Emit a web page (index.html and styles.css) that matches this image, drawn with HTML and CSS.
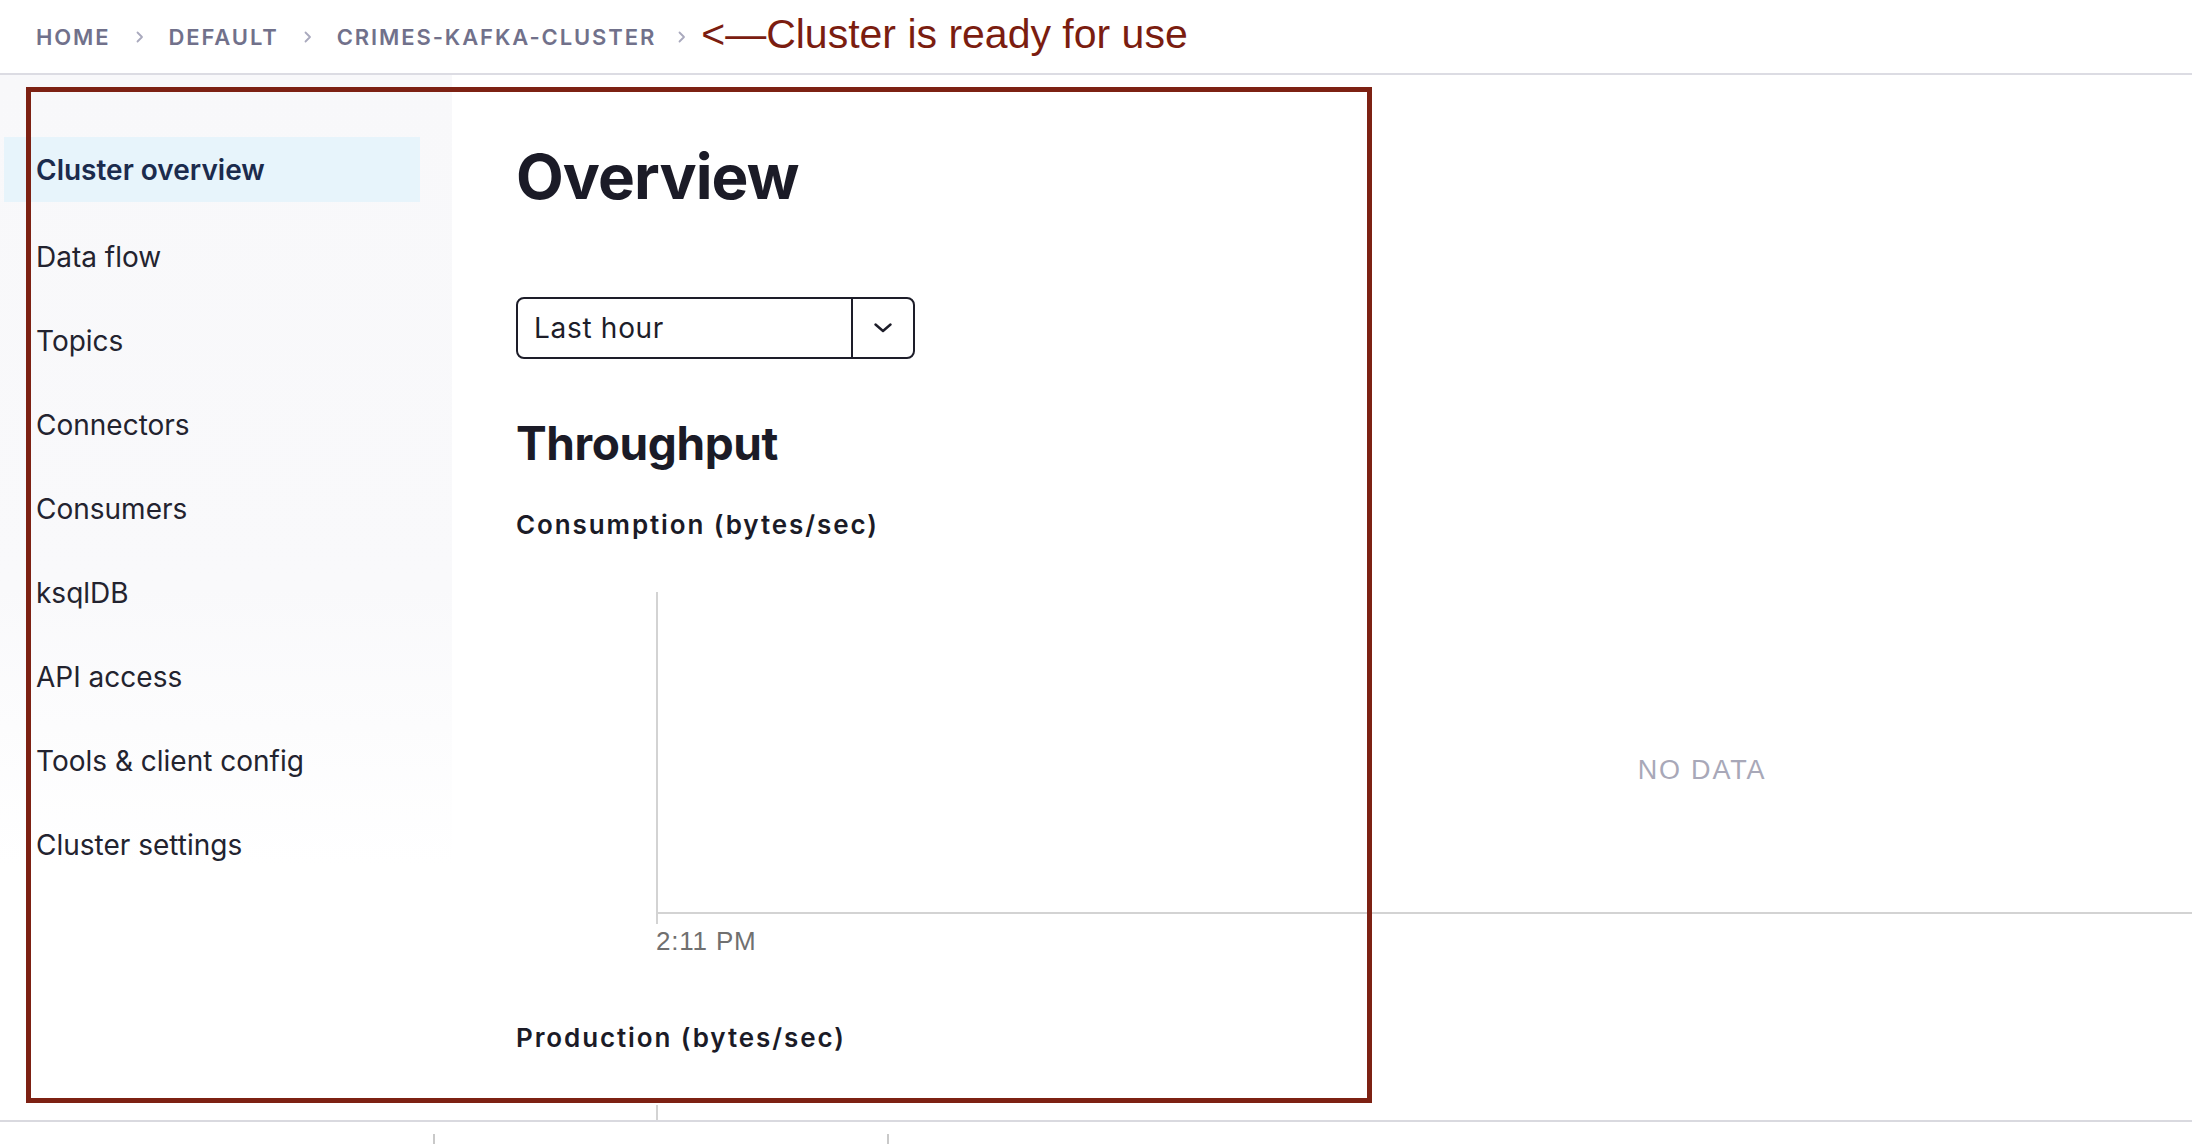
FILE: index.html
```html
<!DOCTYPE html>
<html lang="en">
<head>
<meta charset="utf-8">
<title>Cluster overview</title>
<link rel="stylesheet" href="styles.css">
</head>
<body>
<header class="topbar">
  <nav class="crumbs">
    <span class="crumb">Home</span>
    <svg class="sep" viewBox="0 0 8 12" width="8" height="12"><path d="M1.5 1.5 L6 6 L1.5 10.5" fill="none" stroke="#a9a9bd" stroke-width="1.8" stroke-linecap="round" stroke-linejoin="round"/></svg>
    <span class="crumb">Default</span>
    <svg class="sep" viewBox="0 0 8 12" width="8" height="12"><path d="M1.5 1.5 L6 6 L1.5 10.5" fill="none" stroke="#a9a9bd" stroke-width="1.8" stroke-linecap="round" stroke-linejoin="round"/></svg>
    <span class="crumb">crimes-kafka-cluster</span>
    <svg class="sep sep-last" viewBox="0 0 8 12" width="8" height="12"><path d="M1.5 1.5 L6 6 L1.5 10.5" fill="none" stroke="#a9a9bd" stroke-width="1.8" stroke-linecap="round" stroke-linejoin="round"/></svg>
    <span class="note">&lt;—Cluster is ready for use</span>
  </nav>
</header>

<div class="layout">
  <aside class="sidebar">
    <ul class="nav">
      <li class="nav-item active">Cluster overview</li>
      <li class="nav-item">Data flow</li>
      <li class="nav-item">Topics</li>
      <li class="nav-item">Connectors</li>
      <li class="nav-item">Consumers</li>
      <li class="nav-item">ksqlDB</li>
      <li class="nav-item">API access</li>
      <li class="nav-item">Tools &amp; client config</li>
      <li class="nav-item">Cluster settings</li>
    </ul>
  </aside>

  <main class="main">
    <h1 class="title">Overview</h1>

    <div class="select">
      <span class="select-value">Last hour</span>
      <span class="select-btn">
        <svg viewBox="0 0 18 10" width="18" height="10"><path d="M1.5 1.5 L9 8 L16.5 1.5" fill="none" stroke="#1d1d29" stroke-width="2.4" stroke-linecap="round" stroke-linejoin="round"/></svg>
      </span>
    </div>

    <h2 class="section-title">Throughput</h2>

    <h3 class="chart-title">Consumption (bytes/sec)</h3>
    <div class="chart">
      <div class="plot"></div>
      <span class="tick"></span>
      <span class="xlabel">2:11 PM</span>
      <div class="nodata">NO DATA</div>
    </div>

    <h3 class="chart-title">Production (bytes/sec)</h3>
    <div class="chart">
      <div class="plot"></div>
    </div>
  </main>
</div>

<div class="footer">
  <span class="footer-div"></span>
  <span class="footer-div"></span>
</div>

<div class="annotation-box"></div>
</body>
</html>
```

FILE: styles.css
```css
html, body {
  margin: 0;
  padding: 0;
}

body {
  width: 2192px;
  height: 1144px;
  overflow: hidden;
  background: #ffffff;
  font-family: Inter, "Noto Sans", "Liberation Sans", sans-serif;
  color: #1f1f2b;
  position: relative;
}

/* ---------- Top bar / breadcrumbs ---------- */
.topbar {
  height: 73px;
  border-bottom: 2px solid #dcdce3;
  display: flex;
  align-items: center;
  padding-left: 36px;
}

.crumbs {
  display: flex;
  align-items: center;
}

.crumb {
  font-size: 22px;
  font-weight: 600;
  text-transform: uppercase;
  letter-spacing: 1.9px;
  color: #71718b;
}

.sep {
  display: block;
  margin: 0 25px 0 25px;
}

.sep-last {
  margin-right: 15px;
  margin-left: 22px;
}

.note {
  font-family: "Liberation Sans", Arial, sans-serif;
  font-size: 41px;
  color: #7b1d10;
  margin-top: -4px;
}

/* ---------- Layout ---------- */
.layout {
  display: flex;
}

.sidebar {
  width: 452px;
  flex: none;
  height: 790px;
  padding-top: 62px;
  box-sizing: border-box;
  background: linear-gradient(to bottom, #f8f8fa 0%, #f9f9fb 65%, #ffffff 100%);
}

.nav {
  list-style: none;
  margin: 0;
  padding: 0;
}

.nav-item {
  height: 65px;
  margin: 0 0 19px 4px;
  width: 416px;
  padding-left: 32px;
  box-sizing: border-box;
  display: flex;
  align-items: center;
  font-size: 28px;
  color: #23232f;
}

.nav-item.active {
  background: #e7f4fb;
  color: #1b2b4d;
  font-weight: 600;
  margin-bottom: 22px;
}

/* ---------- Main ---------- */
.main {
  flex: 1;
  padding-left: 64px;
  padding-top: 64px;
}

.title {
  margin: 0;
  font-size: 62px;
  line-height: 76px;
  font-weight: 700;
  letter-spacing: -0.9px;
  color: #1b1b27;
}

.select {
  margin-top: 82px;
  width: 399px;
  height: 62px;
  box-sizing: border-box;
  border: 2px solid #1d1d29;
  border-radius: 8px;
  display: flex;
}

.select-value {
  flex: 1;
  padding-left: 16px;
  font-size: 28px;
  line-height: 58px;
  letter-spacing: 0.7px;
  color: #1d1d29;
}

.select-btn {
  width: 60px;
  border-left: 2px solid #1d1d29;
  display: flex;
  align-items: center;
  justify-content: center;
}

.select-btn svg {
  display: block;
}

.section-title {
  margin: 58px 0 0;
  font-size: 46px;
  line-height: 52px;
  font-weight: 700;
  letter-spacing: -0.4px;
  color: #1b1b27;
}

.chart-title {
  margin: 41px 0 0;
  font-size: 26px;
  line-height: 30px;
  font-weight: 600;
  letter-spacing: 1.9px;
  color: #1b1b27;
}

.chart-title + .chart {
  margin-top: 52px;
}

.chart {
  position: relative;
  margin-left: 140px;
  width: 2092px;
  margin-bottom: 70px;
}

.plot {
  height: 320px;
  border-left: 2px solid #d3d3d3;
  border-bottom: 2px solid #d3d3d3;
}

.tick {
  display: block;
  width: 2px;
  height: 10px;
  background: #d3d3d3;
}

.xlabel {
  display: block;
  margin-top: 5px;
  font-family: "Liberation Sans", Arial, sans-serif;
  font-size: 26px;
  line-height: 24px;
  letter-spacing: 0.8px;
  color: #707070;
}

.nodata {
  position: absolute;
  left: 0;
  right: 0;
  top: 163px;
  text-align: center;
  font-family: "Liberation Sans", Arial, sans-serif;
  font-size: 27px;
  line-height: 30px;
  letter-spacing: 1.8px;
  color: #a8a8b8;
}

/* ---------- Bottom bar ---------- */
.footer {
  position: fixed;
  left: 0;
  right: 0;
  top: 1120px;
  bottom: 0;
  background: #ffffff;
  border-top: 2px solid #d9d9df;
  display: flex;
  gap: 452px;
  padding: 12px 0 0 433px;
}

.footer-div {
  width: 2px;
  height: 14px;
  background: #c9c9c9;
}

/* ---------- Annotation overlay ---------- */
.annotation-box {
  position: absolute;
  left: 26px;
  top: 87px;
  width: 1346px;
  height: 1016px;
  box-sizing: border-box;
  border: 5px solid #7d2113;
  pointer-events: none;
}
```
